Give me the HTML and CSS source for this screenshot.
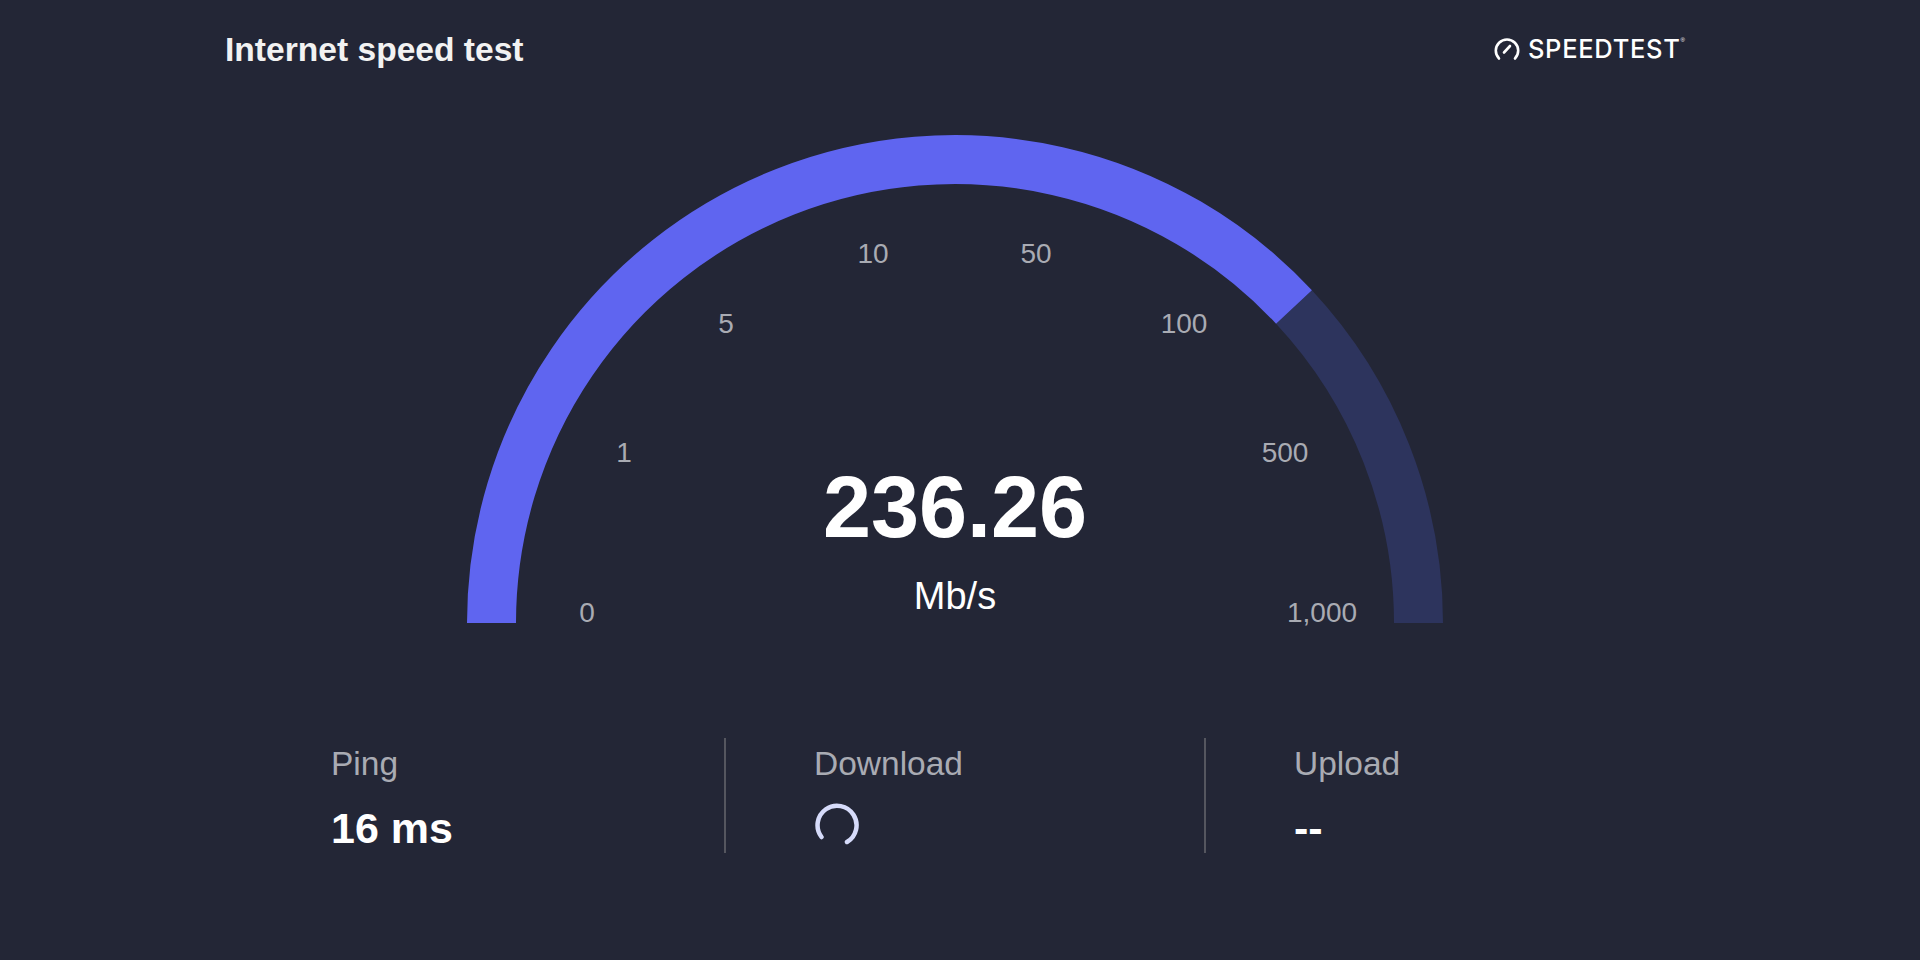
FILE: index.html
```html
<!DOCTYPE html>
<html lang="en">
<head>
    <meta charset="UTF-8">
    <title>Internet speed test</title>
    <link rel="stylesheet" href="styles.css">
</head>
<body>
    <div class="container">
        <header class="header">
            <h1 class="title">Internet speed test</h1>
            <div class="logo">
                <svg class="logo-icon" viewBox="0 0 26 24" width="26" height="24" fill="none" stroke="#fff" stroke-width="2.6" stroke-linecap="round">
                    <path d="M5 21.5 A11.2 11.2 0 1 1 21 21.5"/>
                    <path d="M10 15.5 L16 9"/>
                </svg>
                <span class="logo-text">SPEEDTEST</span><span class="logo-mark">®</span>
            </div>
        </header>

        <div class="gauge">
            <svg class="gauge-arc" viewBox="0 0 976 490" width="976" height="490">
                <path class="arc-rest" d="M827 173 A463.5 463.5 0 0 1 951.5 489"/>
                <path class="arc-done" d="M24.5 489 A463.5 463.5 0 0 1 827 173"/>
            </svg>
            <span class="tick tick-0">0</span>
            <span class="tick tick-1">1</span>
            <span class="tick tick-5">5</span>
            <span class="tick tick-10">10</span>
            <span class="tick tick-50">50</span>
            <span class="tick tick-100">100</span>
            <span class="tick tick-500">500</span>
            <span class="tick tick-1000">1,000</span>
            <div class="reading">
                <div class="reading-value">236.26</div>
                <div class="reading-unit">Mb/s</div>
            </div>
        </div>

        <div class="stats">
            <div class="stat">
                <div class="stat-label">Ping</div>
                <div class="stat-value">16 ms</div>
            </div>
            <div class="stat">
                <div class="stat-label">Download</div>
                <svg class="spinner" viewBox="0 0 46 46" width="46" height="46" fill="none" stroke="#d6dbfa" stroke-width="4.5" stroke-linecap="round">
                    <path d="M7.5 35 A19.5 19.5 0 1 1 33 40"/>
                </svg>
            </div>
            <div class="stat">
                <div class="stat-label">Upload</div>
                <div class="stat-value">--</div>
            </div>
        </div>
    </div>
</body>
</html>
```

FILE: styles.css
```css
html, body {
    margin: 0;
    height: 100%;
}
body {
    font-family: "Liberation Sans", Arial, sans-serif;
    background-color: #232636;
    color: #fff;
    overflow: hidden;
}
.container {
    width: 1460px;
    margin-left: 225px;
}
.header {
    display: flex;
    justify-content: space-between;
    align-items: center;
    padding-top: 30px;
}
.title {
    margin: 0;
    font-size: 33.6px;
    line-height: 40px;
    font-weight: 700;
    color: #f2f2f2;
}
.logo {
    display: flex;
    align-items: center;
    margin-bottom: 3px;
}
.logo-icon {
    margin-right: 8px;
}
.logo-text {
    font-family: Inter, sans-serif;
    font-size: 25.5px;
    font-weight: 500;
    letter-spacing: 0.7px;
}
.logo-mark {
    font-size: 6px;
    align-self: flex-start;
    margin-top: 4px;
}
.gauge {
    position: relative;
    width: 976px;
    height: 490px;
    margin: 64px 0 0 242px;
}
.gauge-arc {
    display: block;
}
.arc-rest,
.arc-done {
    fill: none;
    stroke-width: 49px;
}
.arc-rest {
    stroke: #2d345d;
}
.arc-done {
    stroke: #5f65f0;
}
.tick {
    position: absolute;
    transform: translate(-50%, -50%);
    font-size: 28px;
    color: #a9abb3;
}
.tick-0 { left: 120px; top: 479px; }
.tick-1 { left: 157px; top: 319px; }
.tick-5 { left: 259px; top: 190px; }
.tick-10 { left: 406px; top: 120px; }
.tick-50 { left: 569px; top: 120px; }
.tick-100 { left: 717px; top: 190px; }
.tick-500 { left: 818px; top: 319px; }
.tick-1000 { left: 855px; top: 479px; }
.reading {
    position: absolute;
    left: 0;
    right: 0;
    top: 323px;
    text-align: center;
}
.reading-value {
    font-size: 86.4px;
    line-height: 100px;
    font-weight: 700;
}
.reading-unit {
    font-size: 38px;
    line-height: 44px;
    margin-top: 17px;
}
.stats {
    display: grid;
    grid-template-columns: 483px 480px 481px;
    margin: 114px 0 0 18px;
}
.stat {
    height: 115px;
    padding-left: 88px;
    border-right: 2px solid #55565f;
}
.stat:last-child {
    border-right: none;
}
.stat-label {
    font-size: 33.5px;
    line-height: 40px;
    margin-top: 6px;
    color: #a9abb3;
}
.stat-value {
    font-size: 43px;
    line-height: 48px;
    font-weight: 700;
    margin-top: 20px;
}
.spinner {
    display: block;
    margin-top: 18px;
}
```
